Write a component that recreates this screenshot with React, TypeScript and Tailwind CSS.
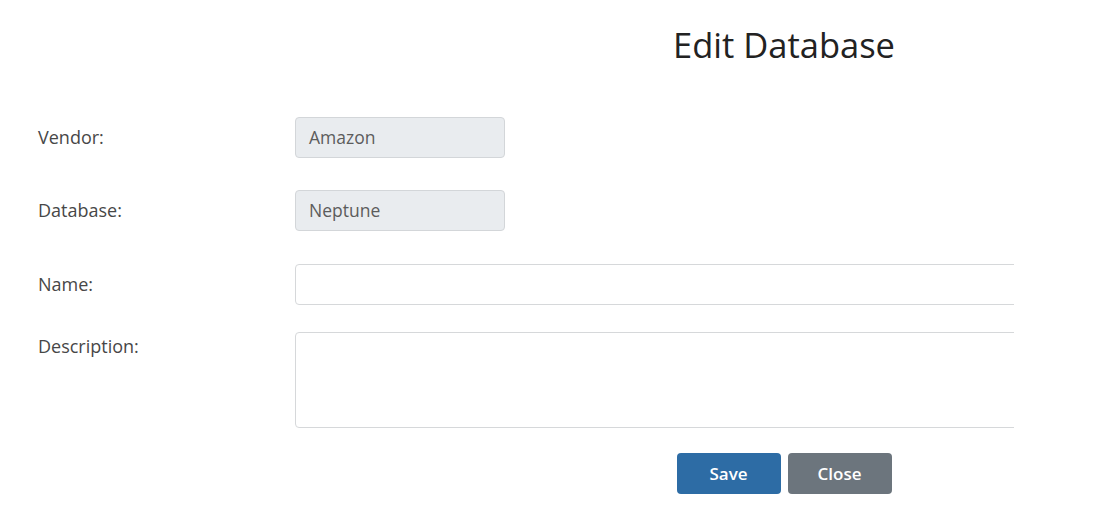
import React from "react";

const font = { fontFamily: '"Open Sans", "Liberation Sans", sans-serif' };

function Row({ label, children, className = "", labelH = "h-[41px]" }: { label: string; children: React.ReactNode; className?: string; labelH?: string }) {
  return (
    <div className={`flex items-start ${className}`}>
      <div className={`w-[295px] shrink-0 pl-[38px] ${labelH} flex items-center text-[18px] text-[#474747]`}>{label}</div>
      {children}
    </div>
  );
}

export default function App() {
  return (
    <div className="w-[1093px] h-[523px] bg-white overflow-hidden" style={font}>
      <div className="w-[1014px] overflow-hidden">
        <div className="w-[1568px]">
          <h1 className="text-center text-[34.5px] text-[#222] pt-[21px] leading-[48px]">Edit Database</h1>
          <div className="mt-[48px]">
            <Row label="Vendor:">
              <div className="w-[210px] h-[41px] rounded-[4px] border border-[#d3d6d9] bg-[#e9ecef] px-[13px] flex items-center text-[17.5px] text-[#5c5c5c]">Amazon</div>
            </Row>
            <Row label="Database:" className="mt-[32px]">
              <div className="w-[210px] h-[41px] rounded-[4px] border border-[#d3d6d9] bg-[#e9ecef] px-[13px] flex items-center text-[17.5px] text-[#5c5c5c]">Neptune</div>
            </Row>
            <Row label="Name:" className="mt-[33px]">
              <div className="w-[1200px] h-[41px] rounded-[4px] border border-[#d6d8da] bg-white"></div>
            </Row>
            <Row label="Description:" className="mt-[27px]" labelH="h-[28px]">
              <div className="w-[1200px] h-[96px] rounded-[4px] border border-[#d6d8da] bg-white"></div>
            </Row>
          </div>
          <div className="flex justify-center gap-[7px] mt-[25px]">
            <button className="w-[104px] h-[41px] rounded-[4px] bg-[#2d6ca5] text-white text-[17px] font-semibold">Save</button>
            <button className="w-[104px] h-[41px] rounded-[4px] bg-[#6c757d] text-white text-[17px] font-semibold">Close</button>
          </div>
        </div>
      </div>
    </div>
  );
}
